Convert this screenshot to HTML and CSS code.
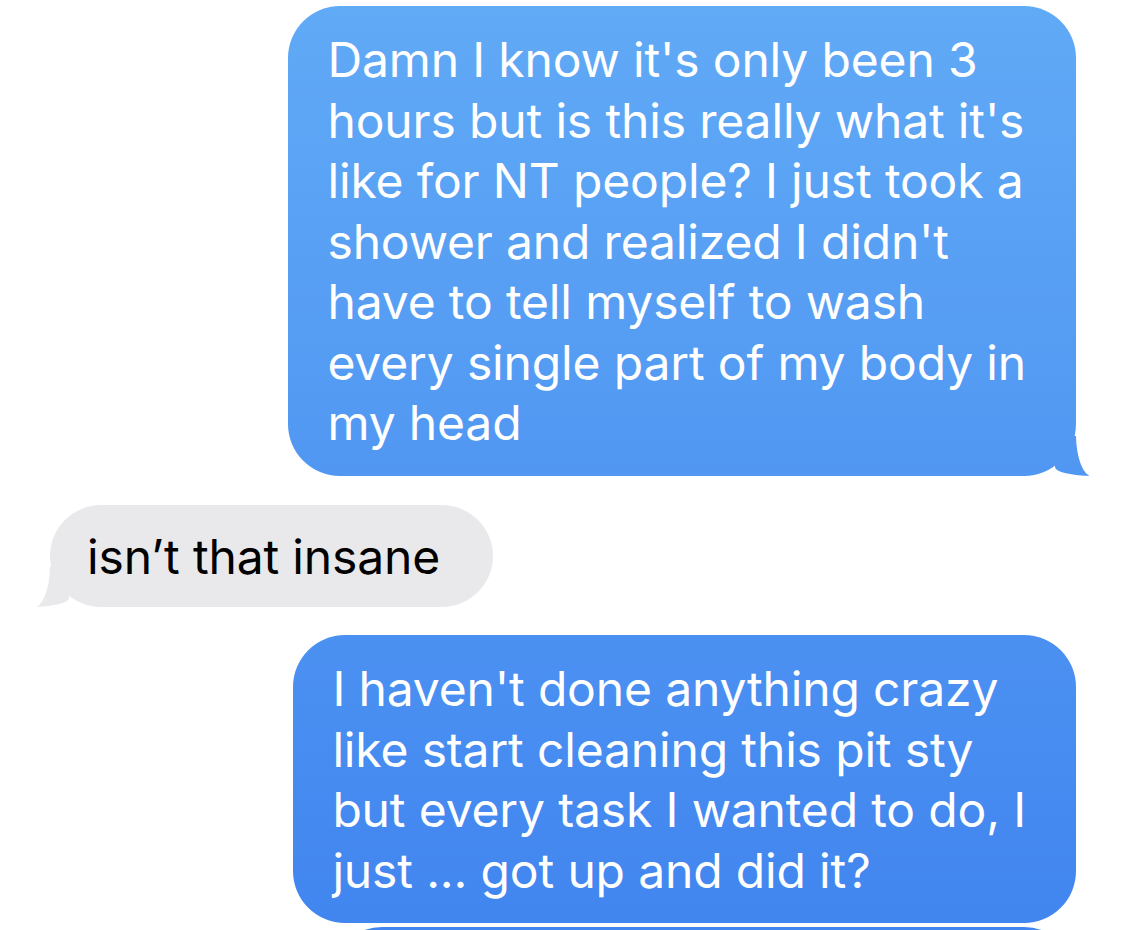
FILE: index.html
```html
<!DOCTYPE html>
<html lang="en">
<head>
<meta charset="utf-8">
<title>Messages</title>
<link rel="stylesheet" href="styles.css">
</head>
<body>
<main class="thread">
  <div class="row row-sent row-first">
    <div class="bubble sent tail">Damn I know it's only been 3<br>hours but is this really what it's<br>like for NT people? I just took a<br>shower and realized I didn't<br>have to tell myself to wash<br>every single part of my body in<br>my head</div>
  </div>
  <div class="row row-received row-gap-a">
    <div class="bubble received tail">isn’t that insane</div>
  </div>
  <div class="row row-sent row-gap-b">
    <div class="bubble sent">I haven't done anything crazy<br>like start cleaning this pit sty<br>but every task I wanted to do, I<br>just ... got up and did it?</div>
  </div>
  <div class="row row-sent row-tight">
    <div class="bubble sent partial"></div>
  </div>
</main>
</body>
</html>
```
FILE: styles.css
```css
html, body {
  margin: 0;
  padding: 0;
  background: #ffffff;
}

body {
  width: 1124px;
  height: 930px;
  overflow: hidden;
  font-family: Inter, "Noto Sans", "Liberation Sans", sans-serif;
}

.thread {
  display: flex;
  flex-direction: column;
}

.row {
  display: flex;
}

.row-first {
  margin-top: 6px;
}

.row-gap-a {
  margin-top: 29px;
}

.row-gap-b {
  margin-top: 28px;
}

.row-tight {
  margin-top: 4px;
}

.row-sent {
  justify-content: flex-end;
  padding-right: 48px;
}

.row-received {
  justify-content: flex-start;
  padding-left: 50px;
}

.bubble {
  position: relative;
  font-size: 48px;
  line-height: 60.5px;
  letter-spacing: -0.15px;
  border-radius: 52px;
  padding: 24px 50px 22px 39px;
}

.sent {
  color: #ffffff;
  background: linear-gradient(180deg, #61aaf6 0px, #4185ef 930px) fixed;
}

.received {
  color: #000000;
  background: #e9e9eb;
  padding: 22px 53px 20px 37px;
}

.partial {
  width: 746px;
  height: 120px;
  padding: 0;
  box-sizing: border-box;
}

.bubble.tail::before,
.bubble.tail::after {
  content: "";
  position: absolute;
  bottom: 0;
}

.sent.tail::before {
  right: -16px;
  width: 37px;
  height: 40px;
  background: linear-gradient(180deg, #61aaf6 0px, #4185ef 930px) fixed;
  border-bottom-left-radius: 37px 9px;
}

.sent.tail::after {
  right: -40px;
  width: 40px;
  height: 46px;
  bottom: -1px;
  background: #ffffff;
  border-bottom-left-radius: 17px 42px;
}

.received.tail::before {
  left: -18px;
  width: 37px;
  height: 40px;
  background: #e9e9eb;
  border-bottom-right-radius: 37px 9px;
}

.received.tail::after {
  left: -40px;
  width: 40px;
  height: 46px;
  bottom: -1px;
  background: #ffffff;
  border-bottom-right-radius: 17px 42px;
}
```
